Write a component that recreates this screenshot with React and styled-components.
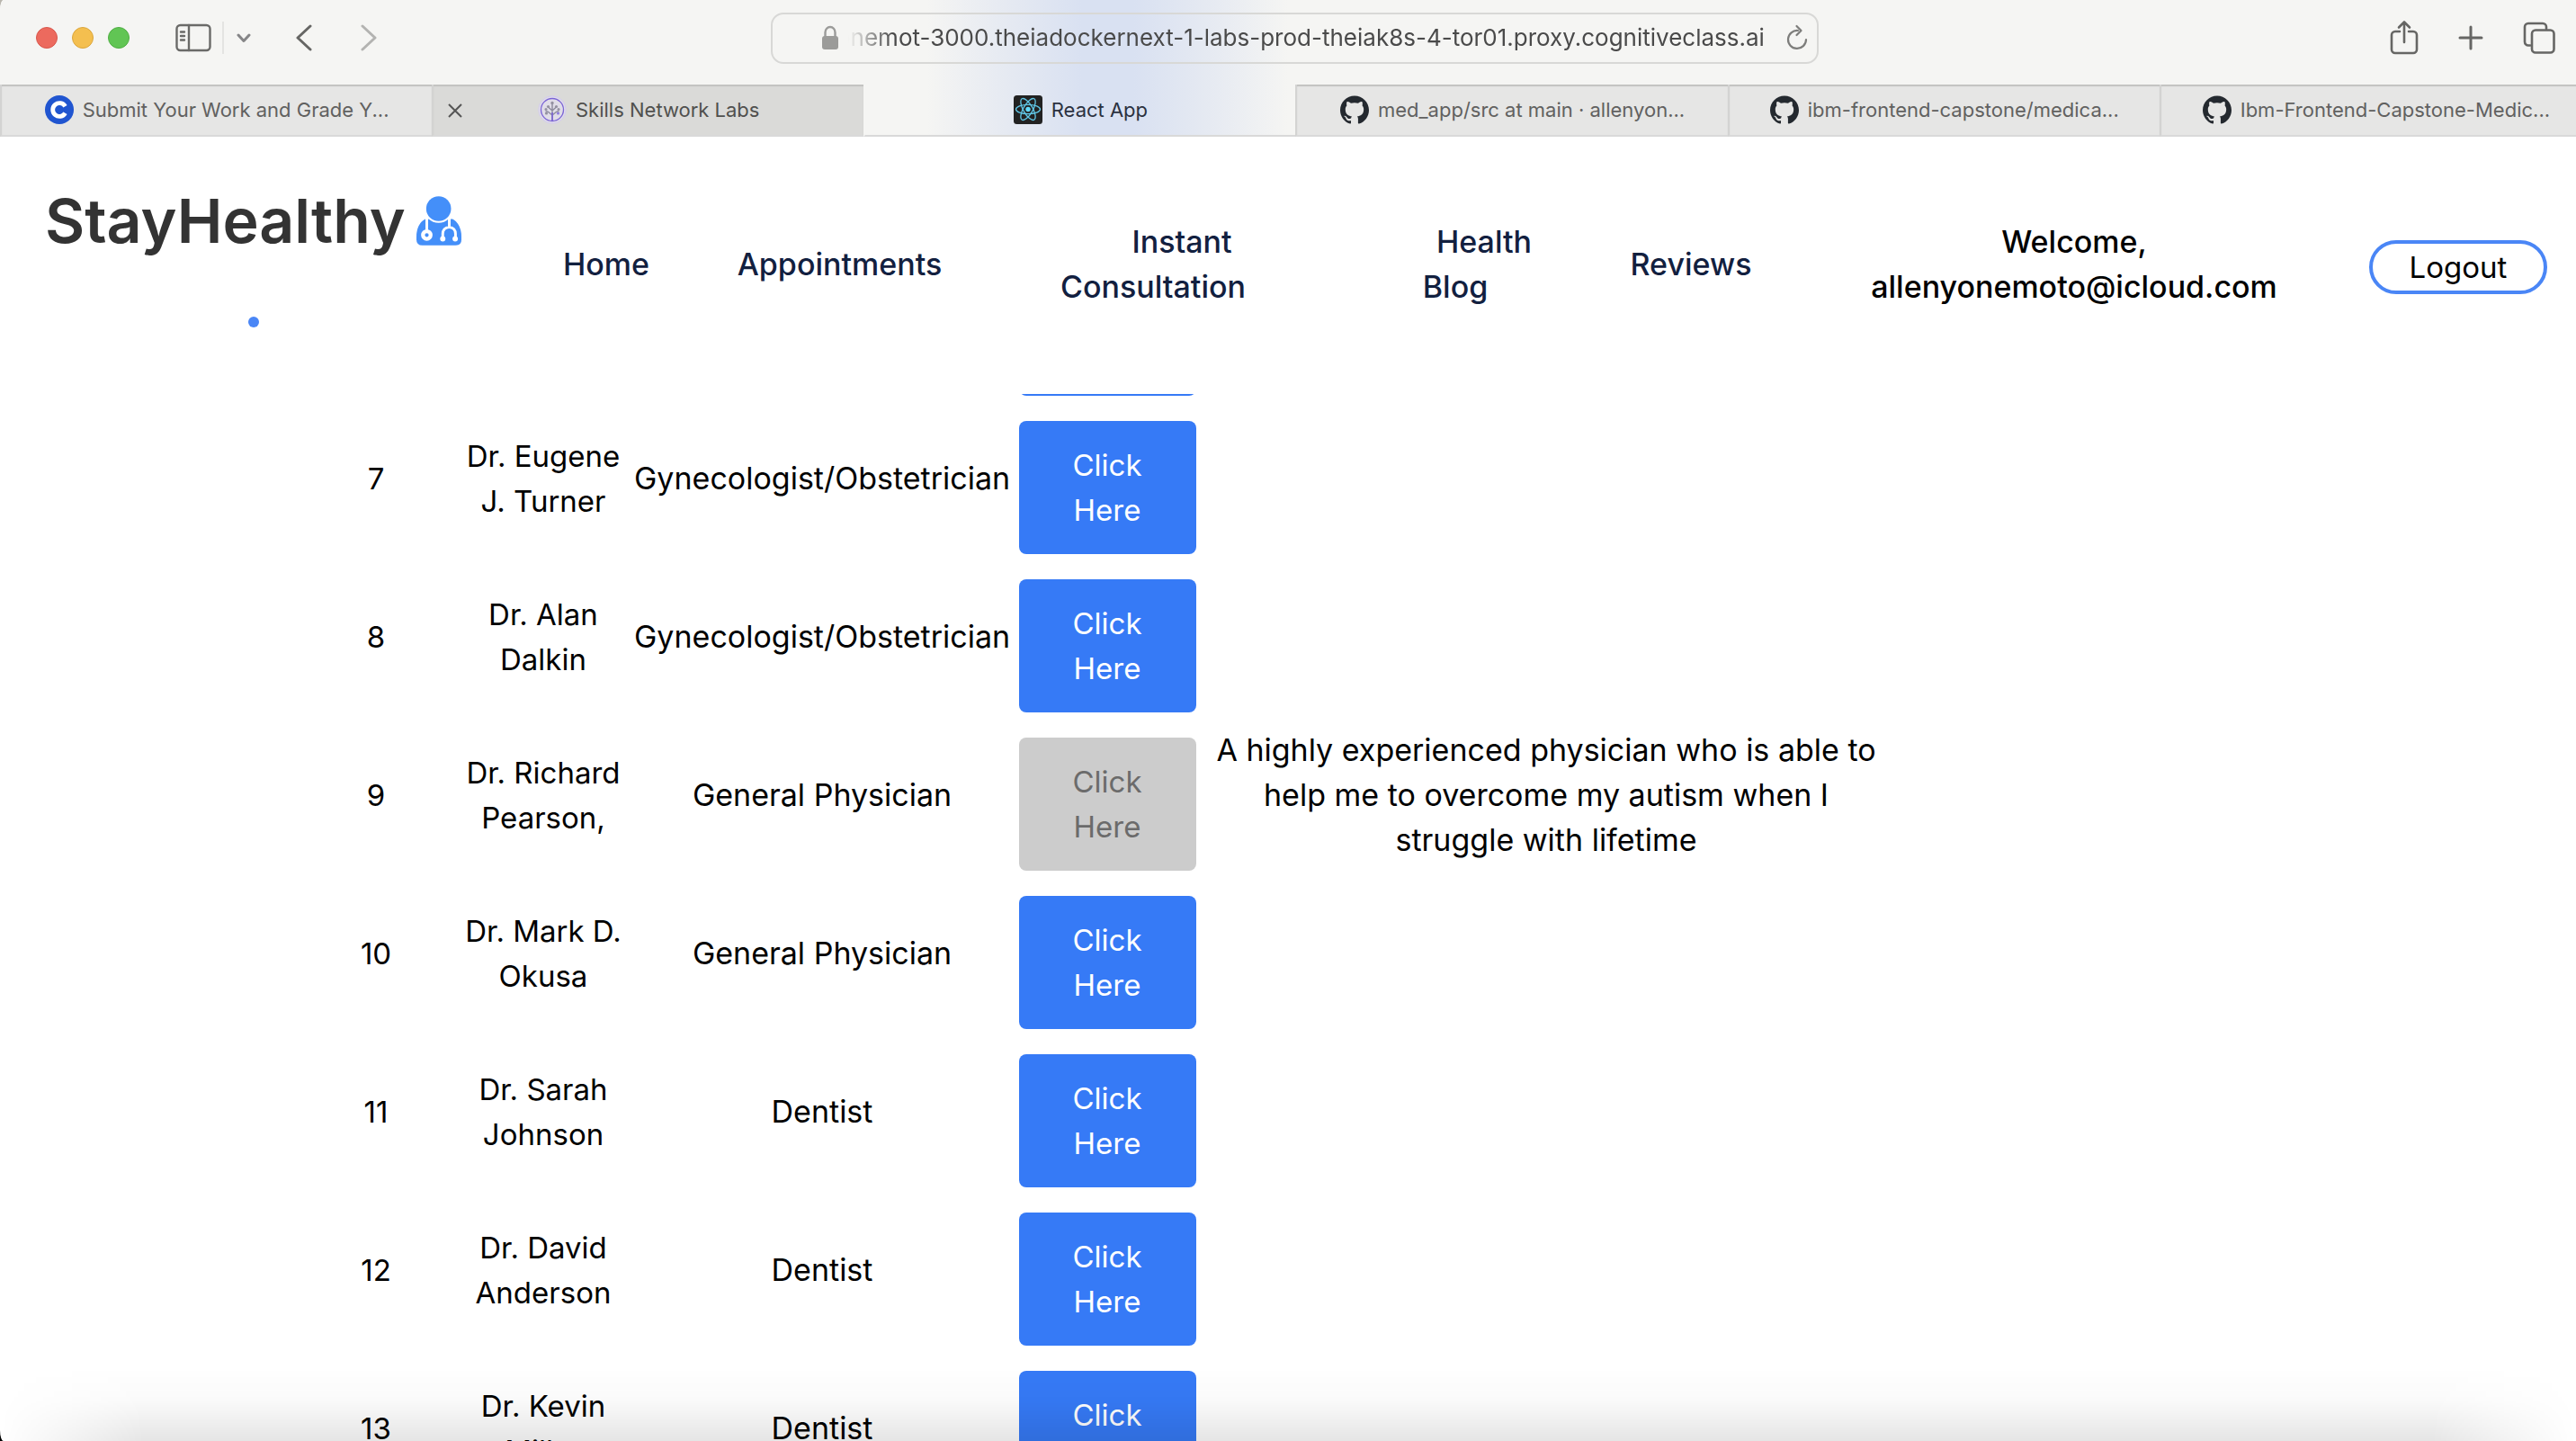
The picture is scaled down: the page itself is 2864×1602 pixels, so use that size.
import React, { useEffect, useRef } from "react";
import styled, { createGlobalStyle } from "styled-components";
import { SiGithub } from "react-icons/si";

const GlobalStyle = createGlobalStyle`
  *, *::before, *::after { box-sizing: border-box; }
  html { background: linear-gradient(#b9b6ae, #000); }
  body { margin: 0; font-family: Inter, "Liberation Sans", sans-serif; color: #000; }
  button, input { font-family: inherit; }
  a { color: inherit; text-decoration: none; }
`;

const Window = styled.div`
  height: 100vh;
  display: flex;
  flex-direction: column;
  overflow: hidden;
  background: #fff;
  border-radius: 4px 0 0 4px / 12px 0 0 12px;
`;

/* ---------- browser chrome ---------- */

const Chrome = styled.header`
  flex: none;
  background:
    linear-gradient(90deg, transparent 36%, #e6eaf2 39%, #d9e1f2 42%, #d9e1f2 44%, #e6eaf2 47%, transparent 50%),
    #f5f5f3;
`;

const Toolbar = styled.div`
  height: 94px;
  padding: 0 23px 10px 40px;
  display: grid;
  grid-template-columns: 817fr 1165fr 819fr;
  align-items: center;
`;

const ToolGroup = styled.div`
  display: flex;
  align-items: center;
  justify-content: ${(p) => (p.$end ? "flex-end" : "flex-start")};
  gap: ${(p) => p.$gap}px;
`;

const Lights = styled.div`
  display: flex;
  gap: 16px;
  margin-right: 51px;
`;

const Light = styled.button`
  width: 24px;
  height: 24px;
  padding: 0;
  border: 1px solid ${(p) => p.$edge};
  border-radius: 50%;
  background: ${(p) => p.$color};
`;

const IconButton = styled.button`
  display: flex;
  padding: 0;
  border: 0;
  background: none;
  color: ${(p) => p.$color || "#666664"};

  svg {
    display: block;
    fill: none;
    stroke: currentColor;
    stroke-linecap: round;
    stroke-linejoin: round;
  }
`;

const Divider = styled.span`
  width: 2px;
  height: 36px;
  margin: 0 14px 0 12px;
  background: #e4e4e2;
`;

const History = styled.div`
  display: flex;
  gap: 54px;
  margin-left: 50px;
`;

const AddressBar = styled.label`
  height: 57px;
  padding: 0 10px 0 54px;
  display: flex;
  align-items: center;
  border: 2px solid #d8d8d6;
  border-radius: 14px;
`;

const Address = styled.input`
  flex: 1;
  min-width: 0;
  margin: 0 24px 0 10px;
  padding: 0;
  border: 0;
  outline: 0;
  background: none;
  text-align: right;
  font-size: 26px;
  line-height: 32px;
  color: #4a4a4a;
  mask-image: linear-gradient(90deg, transparent, #000 50px);
`;

const Tabs = styled.nav`
  height: 58px;
  margin-right: -17px;
  display: grid;
  grid-template-columns: repeat(6, minmax(0, 1fr));
`;

const Tab = styled.a`
  position: relative;
  display: flex;
  align-items: center;
  justify-content: center;
  gap: 10px;
  border-left: 2px solid ${(p) => (p.$active ? "transparent" : "#d3d3d2")};
  border-bottom: 2px solid #d9d9d9;
  background: ${(p) => (p.$active ? "none" : p.$hover ? "#dadad8" : "#e6e6e5")};
  box-shadow: ${(p) => (p.$active ? "none" : "inset 0 2px 1px #c2c2c0")};
  color: ${(p) => (p.$active ? "#2b3140" : p.$hover ? "#50504e" : "#616160")};
  font-size: 22px;
  line-height: 28px;
  white-space: nowrap;

  svg { flex: none; }
`;

const TabClose = styled.span`
  position: absolute;
  left: 16px;
  top: 21px;
  color: #555;
  svg { display: block; }
`;

/* ---------- site header ---------- */

const SiteNav = styled.nav`
  flex: none;
  height: 286px;
  padding: 0 29px 0 50px;
  display: grid;
  grid-template-columns: 538fr 172fr 347fr 350fr 322fr 202fr 650fr 204fr;
`;

const Brand = styled.div`
  width: 463px;
  padding-top: 48px;
  display: flex;
  flex-direction: column;
  align-items: center;
  gap: 62px;
`;

const BrandLink = styled.a`
  width: 100%;
  display: flex;
  align-items: center;
  justify-content: space-between;
  font-size: 68px;
  font-weight: 600;
  line-height: 90px;
  color: #333;
`;

const BrandDot = styled.span`
  width: 12px;
  height: 12px;
  border-radius: 50%;
  background: #4a86f6;
`;

const NavItem = styled.div`
  height: 284px;
  display: flex;
  align-items: center;
  justify-content: center;
  text-align: center;
  font-size: 34px;
  font-weight: 500;
  line-height: 50px;
  white-space: nowrap;
  color: ${(p) => (p.$plain ? "#000" : "#12203f")};

  a { text-indent: ${(p) => (p.$indent ? "64px" : 0)}; }
`;

const Logout = styled.button`
  width: 198px;
  height: 60px;
  margin-top: 6px;
  padding: 0;
  border: 4px solid #4a86f6;
  border-radius: 30px;
  background: #fff;
  color: #000;
  font-size: 33px;
  line-height: 50px;
`;

/* ---------- reviews table ---------- */

const Scroller = styled.main`
  flex: 1;
  min-height: 0;
  overflow: hidden;
`;

const ReviewTable = styled.table`
  width: calc(100% - 1086px);
  margin: -172px 0 0 327px;
  table-layout: fixed;
  border-collapse: separate;
  border-spacing: 4px;
  text-align: center;
  line-height: 50px;
`;

const Col = styled.col`
  width: ${(p) => p.$width};
`;

const Cell = styled.td`
  height: 172px;
  padding: 2px;
  vertical-align: middle;
  white-space: pre;
  font-size: ${(p) => (p.$wide ? 34 : 33)}px;
`;

const Feedback = styled.button`
  display: block;
  width: 197px;
  height: 148px;
  margin: 20px auto 0;
  padding: 24px 50px;
  border: 0;
  border-radius: 8px;
  background: #367af6;
  color: #fff;
  font-size: 33px;
  line-height: 50px;

  &:disabled { background: #ccc; color: #6b6b6b; }
`;

const DockShade = styled.div`
  position: fixed;
  inset: auto 0 0 0;
  height: 82px;
  pointer-events: none;
  background: linear-gradient(transparent, rgba(0, 0, 0, 0.02) 45%, rgba(0, 0, 0, 0.1));
  mask-image: linear-gradient(90deg, transparent, #000 160px, #000 calc(100% - 160px), transparent);
`;

/* ---------- drawings ---------- */

const SidebarIcon = () => (
  <svg width="40" height="32" viewBox="0 0 40 32" strokeWidth="2.4">
    <rect x="1.5" y="2" width="37" height="28" rx="4" />
    <path d="M15 2V30M6 9.500H10M6 14H10M6 18.500H10" />
  </svg>
);

const ChevronDown = () => (
  <svg width="16" height="12" viewBox="0 0 16 12" strokeWidth="3">
    <path d="M2 3L8 9.500L14 3" />
  </svg>
);

const Chevron = ({ forward }) => (
  <svg width="18" height="30" viewBox="0 0 18 30" strokeWidth="3">
    <path d={forward ? "M2 2L16 15L2 28" : "M16 2L2 15L16 28"} />
  </svg>
);

const LockIcon = () => (
  <svg width="20" height="28" viewBox="0 0 20 28">
    <rect x="1" y="12" width="18" height="15" rx="3" fill="#9b9b99" />
    <path d="M4.500 13V8a5.500 6 0 0 1 11 0V13" fill="none" stroke="#9b9b99" strokeWidth="2.400" />
  </svg>
);

const ReloadIcon = () => (
  <svg width="24" height="30" viewBox="0 0 24 30" strokeWidth="2.2">
    <path d="M13 7A10 10 0 1 0 22 17" />
    <path d="M11.500 2L16.500 7L11.500 12" />
  </svg>
);

const ShareIcon = () => (
  <svg width="32" height="40" viewBox="0 0 32 40" strokeWidth="2.600">
    <path d="M11 13H6a4 4 0 0 0-4 4V33a4 4 0 0 0 4 4H26a4 4 0 0 0 4-4V17a4 4 0 0 0-4-4H21" />
    <path d="M16 25V3M10 8.500L16 2.500L22 8.500" />
  </svg>
);

const PlusIcon = () => (
  <svg width="28" height="28" viewBox="0 0 28 28" strokeWidth="3">
    <path d="M14 2V26M2 14H26" />
  </svg>
);

const CopyIcon = () => (
  <svg width="36" height="36" viewBox="0 0 36 36" strokeWidth="2.600">
    <path d="M8 26.500H6a4 4 0 0 1-4-4V6a4 4 0 0 1 4-4H22a4 4 0 0 1 4 4V8" />
    <rect x="10" y="9.500" width="24.500" height="25" rx="4" />
  </svg>
);

const CloseIcon = () => (
  <svg width="16" height="16" viewBox="0 0 16 16" fill="none" stroke="currentColor" strokeWidth="2">
    <path d="M1 1L15 15M15 1L1 15" />
  </svg>
);

const CourseraIcon = () => (
  <svg width="32" height="32" viewBox="0 0 32 32">
    <circle cx="16" cy="16" r="16" fill="#2055d0" />
    <path d="M22.500 12.300A7.400 7.400 0 1 0 22.500 19.700" fill="none" stroke="#fff" strokeWidth="4.800" />
  </svg>
);

const SkillsIcon = () => (
  <svg width="32" height="32" viewBox="0 0 32 32" fill="none">
    <circle cx="16" cy="16" r="15.200" fill="#e0dde8" stroke="#d3cbee" />
    <circle cx="16" cy="16" r="12.500" stroke="#7a63d6" strokeWidth="1.300" />
    <path d="M16 28V9M16 22L11 18M16 22L21 18M16 17L11.500 13M16 17L20.500 13M11 18H8.500M21 18H23.500" stroke="#8c8a9c" strokeWidth="1.400" />
    <path d="M16 28V19" stroke="#7a63d6" strokeWidth="1.600" />
    <g fill="#9391a0">
      <circle cx="16" cy="8.500" r="1.700" />
      <circle cx="11.500" cy="12.500" r="1.600" />
      <circle cx="20.500" cy="12.500" r="1.600" />
      <circle cx="9" cy="15.500" r="1.500" />
      <circle cx="23" cy="15.500" r="1.500" />
      <circle cx="9.500" cy="20" r="1.600" />
      <circle cx="22.500" cy="20" r="1.600" fill="#8f7ce0" />
    </g>
  </svg>
);

const ReactIcon = () => (
  <svg width="32" height="32" viewBox="0 0 32 32">
    <rect width="32" height="32" rx="3.500" fill="#222" />
    <g fill="none" stroke="#61c8e8" strokeWidth="1.300">
      <ellipse cx="16" cy="15.500" rx="13.500" ry="5.200" />
      <ellipse cx="16" cy="15.500" rx="13.500" ry="5.200" transform="rotate(60 16 15.500)" />
      <ellipse cx="16" cy="15.500" rx="13.500" ry="5.200" transform="rotate(120 16 15.500)" />
    </g>
    <circle cx="16" cy="15.500" r="2.700" fill="#61dafb" />
  </svg>
);

const GithubIcon = () => <SiGithub size={32} color="#24292f" />;

const DoctorIcon = () => (
  <svg width="50" height="55" viewBox="0 0 152 166">
    <path d="M30 77C12 86 0 108 0 136V146Q0 166 20 166H132Q152 166 152 146V136C152 108 140 86 122 77Z" fill="#448ff9" />
    <circle cx="75" cy="42" r="48" fill="#fff" />
    <circle cx="75" cy="42" r="42" fill="#448ff9" />
    <g fill="none" stroke="#fff" strokeWidth="9" strokeLinecap="round">
      <path d="M35 74V116" />
      <circle cx="35" cy="131" r="13" strokeWidth="13" />
      <path d="M111 74V104M89 145V126a21.500 22 0 0 1 43 0V145" />
    </g>
    <circle cx="89" cy="144" r="9" fill="#fff" />
    <circle cx="131" cy="144" r="9" fill="#fff" />
  </svg>
);

/* ---------- data ---------- */

const address = "onemot-3000.theiadockernext-1-labs-prod-theiak8s-4-tor01.proxy.cognitiveclass.ai";

const tabs = [
  { title: "Submit Your Work and Grade Y...", Icon: CourseraIcon },
  { title: "Skills Network Labs", Icon: SkillsIcon, hover: true },
  { title: "React App", Icon: ReactIcon, active: true },
  { title: "med_app/src at main · allenyon...", Icon: GithubIcon },
  { title: "ibm-frontend-capstone/medica...", Icon: GithubIcon },
  { title: "Ibm-Frontend-Capstone-Medic...", Icon: GithubIcon },
];

const doctors = [
  { id: 7, name: "Dr. Eugene\nJ. Turner", speciality: "Gynecologist/Obstetrician" },
  { id: 8, name: "Dr. Alan\nDalkin", speciality: "Gynecologist/Obstetrician" },
  {
    id: 9,
    name: "Dr. Richard\nPearson,",
    speciality: "General Physician",
    review:
      "A highly experienced physician who is able to\nhelp me to overcome my autism when I\nstruggle with lifetime",
  },
  { id: 10, name: "Dr. Mark D.\nOkusa", speciality: "General Physician" },
  { id: 11, name: "Dr. Sarah\nJohnson", speciality: "Dentist" },
  { id: 12, name: "Dr. David\nAnderson", speciality: "Dentist" },
  { id: 13, name: "Dr. Kevin\nMiller", speciality: "Dentist" },
];

export default function App() {
  const addressRef = useRef(null);

  // A long address shows its end; the start fades out under the lock.
  useEffect(() => {
    const field = addressRef.current;
    const showEnd = () => { field.scrollLeft = field.scrollWidth; };
    showEnd();
    document.fonts?.ready.then(showEnd);
  }, []);

  return (
    <>
      <GlobalStyle />
      <Window>
        <Chrome>
          <Toolbar>
            <ToolGroup $gap={0}>
              <Lights>
                <Light $color="#ec6a5e" $edge="#d8574c" aria-label="Close window" />
                <Light $color="#f4bf4f" $edge="#dba63c" aria-label="Minimise window" />
                <Light $color="#61c554" $edge="#4fae43" aria-label="Zoom window" />
              </Lights>
              <IconButton aria-label="Sidebar" $color="#6a6a68"><SidebarIcon /></IconButton>
              <Divider />
              <IconButton aria-label="Tab groups" $color="#858587"><ChevronDown /></IconButton>
              <History>
                <IconButton aria-label="Back"><Chevron /></IconButton>
                <IconButton aria-label="Forward" $color="#b3b3b1"><Chevron forward /></IconButton>
              </History>
            </ToolGroup>
            <AddressBar>
              <LockIcon />
              <Address ref={addressRef} readOnly aria-label="Address" defaultValue={address} />
              <IconButton aria-label="Reload" $color="#7d7d7b"><ReloadIcon /></IconButton>
            </AddressBar>
            <ToolGroup $end $gap={44}>
              <IconButton aria-label="Share"><ShareIcon /></IconButton>
              <IconButton aria-label="New tab"><PlusIcon /></IconButton>
              <IconButton aria-label="Tab overview"><CopyIcon /></IconButton>
            </ToolGroup>
          </Toolbar>
          <Tabs aria-label="Tabs">
            {tabs.map(({ title, Icon, hover, active }) => (
              <Tab key={title} href="#" $hover={hover} $active={active}>
                {hover && <TabClose><CloseIcon /></TabClose>}
                <Icon />
                {title}
              </Tab>
            ))}
          </Tabs>
        </Chrome>

        <SiteNav aria-label="Main">
          <Brand>
            <BrandLink href="#">
              StayHealthy
              <DoctorIcon />
            </BrandLink>
            <BrandDot />
          </Brand>
          <NavItem><a href="#">Home</a></NavItem>
          <NavItem><a href="#">Appointments</a></NavItem>
          <NavItem $indent><a href="#">Instant<br />Consultation</a></NavItem>
          <NavItem $indent><a href="#">Health<br />Blog</a></NavItem>
          <NavItem><a href="#">Reviews</a></NavItem>
          <NavItem $plain>Welcome,<br />allenyonemoto@icloud.com</NavItem>
          <NavItem $plain><Logout>Logout</Logout></NavItem>
        </SiteNav>

        <Scroller>
          <ReviewTable>
            <colgroup>
              <Col $width="174px" />
              <Col $width="190px" />
              <Col $width="422px" />
              <Col $width="204px" />
              <Col $width="auto" />
            </colgroup>
            <tbody>
              <tr>
                <Cell colSpan={3} />
                <Cell><Feedback aria-label="Click Here" /></Cell>
                <Cell />
              </tr>
              {doctors.map((d) => (
                <tr key={d.id}>
                  <Cell>{d.id}</Cell>
                  <Cell>{d.name}</Cell>
                  <Cell $wide>{d.speciality}</Cell>
                  <Cell><Feedback disabled={Boolean(d.review)}>Click{"\n"}Here</Feedback></Cell>
                  <Cell $wide>{d.review}</Cell>
                </tr>
              ))}
            </tbody>
          </ReviewTable>
        </Scroller>
        <DockShade />
      </Window>
    </>
  );
}
